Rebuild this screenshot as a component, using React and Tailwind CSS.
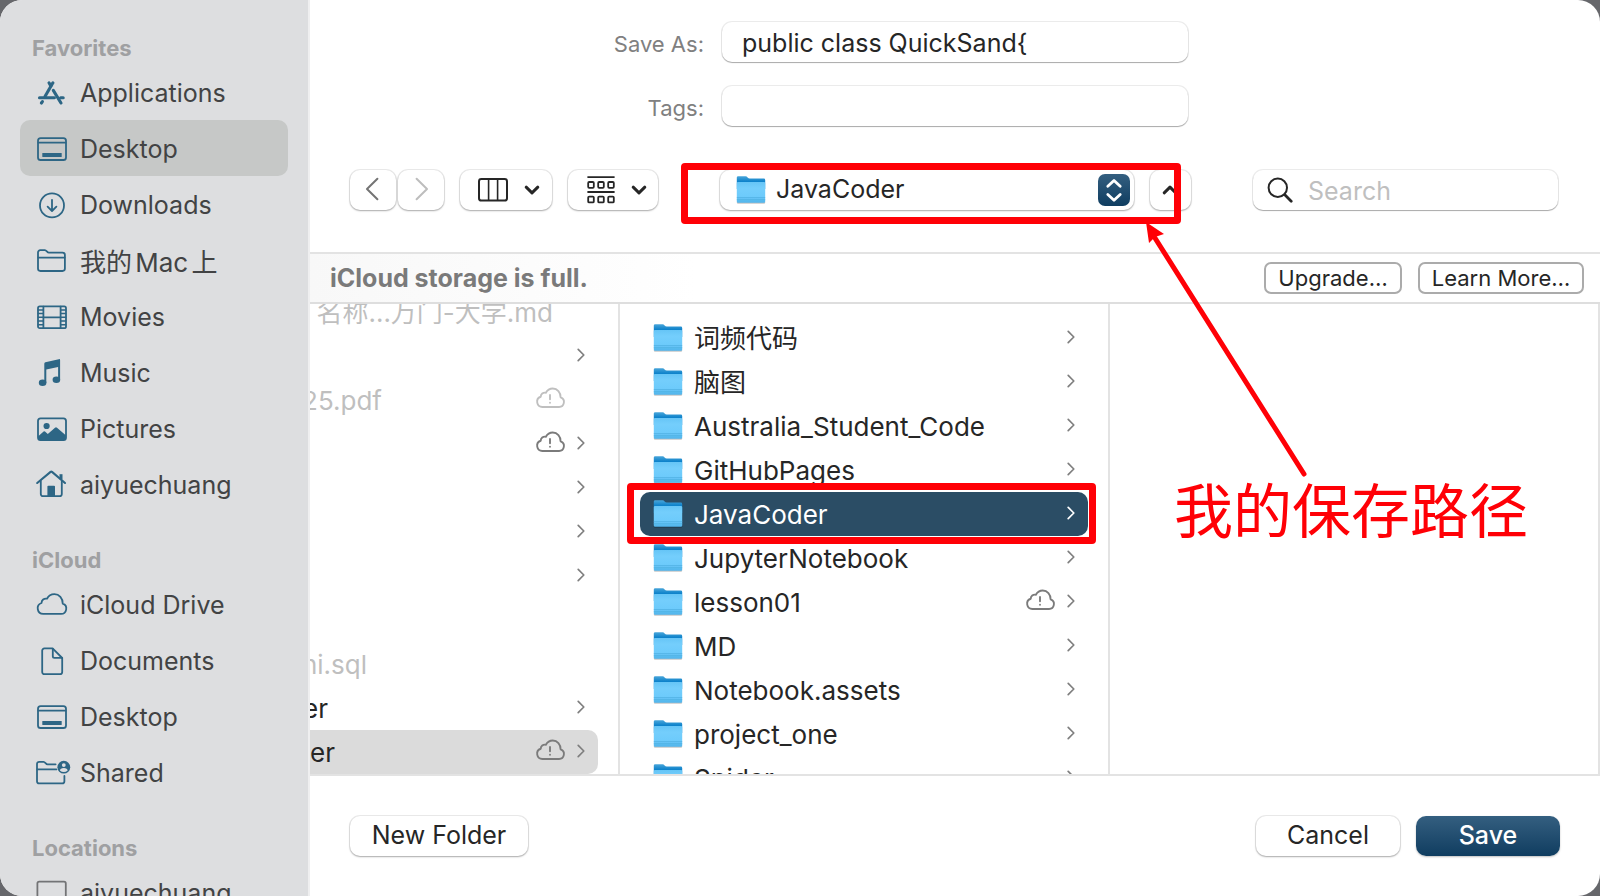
import React from "react";

const ICON = "block h-8 w-8 shrink-0 overflow-visible";

function Icon({ children }) {
  return (
    <svg
      viewBox="0 0 32 32"
      className={ICON}
      fill="none"
      stroke="currentColor"
      strokeWidth="1.8"
      strokeLinecap="round"
      strokeLinejoin="round"
      aria-hidden="true"
    >
      {children}
    </svg>
  );
}

const AppsIcon = () => (
  <Icon>
    <g strokeWidth="3.1">
      <path d="M3.5 20.8H18.4" />
      <path d="M24.6 20.8H27.2" />
      <path d="M16.9 5.8L9 19.6" />
      <path d="M13 5.8L14.8 9" />
      <path d="M17.3 13.4L25 26" />
      <path d="M6.4 24.6L5.4 26" />
    </g>
  </Icon>
);

const DesktopIcon = () => (
  <Icon>
    <rect x="2" y="5.2" width="28" height="21.8" rx="2.6" />
    <path d="M2.5 9.6H29.5" />
    <rect x="6.3" y="20" width="19.4" height="4" rx="0.6" fill="currentColor" stroke="none" />
  </Icon>
);

const DownloadIcon = () => (
  <Icon>
    <circle cx="16" cy="16.4" r="12" />
    <path d="M16 10.8V21.6M11.6 17.6L16 22L20.4 17.6" />
  </Icon>
);

const FolderOutlineIcon = () => (
  <Icon>
    <path d="M2 23.6V7.4a2.3 2.3 0 0 1 2.3-2.3h4.6c1.6 0 2.3 2.6 4 2.6h13.6a2.4 2.4 0 0 1 2.4 2.4v13.5a2.4 2.4 0 0 1-2.4 2.4H4.4A2.4 2.4 0 0 1 2 23.6z" />
    <path d="M2.4 12.6H28.6" />
  </Icon>
);

const MovieIcon = () => (
  <Icon>
    <rect x="2" y="5.4" width="28" height="21.8" rx="1.8" />
    <path d="M7.4 5.6V27M24.6 5.6V27M7.4 16.3H24.6" />
    <path
      strokeWidth="1.5"
      d="M2.4 8.9H7M2.4 12.6H7M2.4 16.3H7M2.4 20H7M2.4 23.7H7M25 8.9H29.6M25 12.6H29.6M25 16.3H29.6M25 20H29.6M25 23.7H29.6"
    />
  </Icon>
);

const MusicIcon = () => (
  <Icon>
    <g fill="currentColor" stroke="none">
      <path d="M8.3 6.7a1.4 1.4 0 0 1 1.1-1.4L22.8 2.2a1 1 0 0 1 1.3 1V22.4H22.1V9.9L10.3 12.6V26H8.3z" />
      <ellipse cx="6.6" cy="25.7" rx="3.8" ry="3.3" />
      <ellipse cx="20.4" cy="22.8" rx="3.8" ry="3.3" />
    </g>
  </Icon>
);

const PictureIcon = () => (
  <Icon>
    <rect x="2" y="5.4" width="28" height="21.8" rx="2.6" />
    <circle cx="10.6" cy="13" r="3.1" fill="currentColor" stroke="none" />
    <path
      d="M2 23.4L7.6 18.4Q8.3 17.9 9 18.5L11.8 21L19 14.7Q20 13.9 21 14.7L30 22.6V25a2.4 2.4 0 0 1-2.4 2.4H4.4A2.4 2.4 0 0 1 2 25z"
      fill="currentColor"
      stroke="none"
    />
  </Icon>
);

const HomeIcon = () => (
  <Icon>
    <path d="M1.2 14L14.6 2.9Q15.3 2.4 16 2.9L29 14" strokeWidth="2.1" />
    <path d="M4.8 12V25a2.2 2.2 0 0 0 2.2 2.2H23.6A2.2 2.2 0 0 0 25.8 25V12" />
    <path d="M25 10.4V5.2" strokeWidth="3" strokeLinecap="butt" />
    <path d="M11.4 17.6a.9.9 0 0 1 .9-.9h5.8a.9.9 0 0 1 .9.9V27H11.4z" fill="currentColor" stroke="none" />
  </Icon>
);

const CLOUD =
  "M8 20.9H25.4a5.3 5.3 0 0 0 1.9-10.3C27.4 5.4 23.8 1.2 19 1.2c-3.4 0-5.9 1.7-7.4 4.5-3.1-.5-5.4 1.4-5.5 4.3A5.6 5.6 0 0 0 8 20.9z";

const CloudIcon = () => (
  <Icon>
    <path transform="translate(-0.6 4)" d={CLOUD} />
  </Icon>
);

const DocumentIcon = () => (
  <Icon>
    <path d="M8.4 3.4H16.6L26.2 13V27a2.2 2.2 0 0 1-2.2 2.2H8.4A2.2 2.2 0 0 1 6.2 27V5.6A2.2 2.2 0 0 1 8.4 3.4z" />
    <path d="M16.8 3.8V11.2a1.6 1.6 0 0 0 1.6 1.6H26" />
  </Icon>
);

const SharedIcon = () => (
  <Icon>
    <path d="M28.4 19V24.2a2.2 2.2 0 0 1-2.2 2.2H3.2A2.2 2.2 0 0 1 1 24.2V7A2.2 2.2 0 0 1 3.2 4.8H7.6c1.6 0 2.3 2.5 4 2.5H19.6" />
    <path d="M1.4 12.4H20.4" />
    <circle cx="27.8" cy="10.2" r="6.4" fill="currentColor" stroke="none" />
    <circle cx="27.8" cy="8.1" r="1.9" fill="#dddee0" stroke="none" />
    <path d="M23.9 13.4Q24.2 10.9 27.8 10.9T31.7 13.4Q30 14.9 27.8 14.9T23.9 13.4z" fill="#dddee0" stroke="none" />
  </Icon>
);

const LaptopIcon = () => (
  <Icon>
    <rect x="1.4" y="4.6" width="28.4" height="19" rx="1.8" />
    <path d="M0 27.4H32" />
  </Icon>
);

const SECTIONS = [
  {
    title: "Favorites",
    items: [
      { label: "Applications", Glyph: AppsIcon },
      { label: "Desktop", Glyph: DesktopIcon, selected: true },
      { label: "Downloads", Glyph: DownloadIcon },
      { label: "我的Mac上", Glyph: FolderOutlineIcon, cjk: true },
      { label: "Movies", Glyph: MovieIcon },
      { label: "Music", Glyph: MusicIcon },
      { label: "Pictures", Glyph: PictureIcon },
      { label: "aiyuechuang", Glyph: HomeIcon },
    ],
  },
  {
    title: "iCloud",
    items: [
      { label: "iCloud Drive", Glyph: CloudIcon },
      { label: "Documents", Glyph: DocumentIcon },
      { label: "Desktop", Glyph: DesktopIcon },
      { label: "Shared", Glyph: SharedIcon },
    ],
  },
  {
    title: "Locations",
    items: [{ label: "aiyuechuang", Glyph: LaptopIcon, muted: true }],
  },
];

function Sidebar() {
  return (
    <nav
      aria-label="Sidebar"
      className="flex w-[310px] shrink-0 flex-col gap-8 overflow-hidden border-r-2 border-[#efeff0] bg-[#dddee0] px-5 pt-8"
    >
      {SECTIONS.map(({ title, items }) => (
        <section key={title} className="shrink-0">
          <h2 className="h-8 px-3 text-[22px] leading-8 font-bold text-[#9fa0a2]">{title}</h2>
          <ul>
            {items.map(({ label, Glyph, selected, muted, cjk }) => (
              <li key={label}>
                <button
                  type="button"
                  className={`flex h-14 w-full items-center gap-3 rounded-[10px] pt-[2px] pl-4 text-left ${
                    selected ? "bg-[#c6c8c7]" : ""
                  } ${muted ? "text-[#737476]" : "text-[#2d6685]"}`}
                >
                  <Glyph />
                  <span
                    className={`pt-[2px] whitespace-nowrap text-[#424344] ${
                      cjk ? "text-[26px] [text-autospace:normal]" : ""
                    }`}
                  >
                    {label}
                  </span>
                </button>
              </li>
            ))}
          </ul>
        </section>
      ))}
    </nav>
  );
}

function FolderIcon() {
  return (
    <svg viewBox="0 0 30 30" className="block h-[30px] w-[30px] shrink-0" aria-hidden="true">
      <defs>
        <linearGradient id="folder-back" x1="0" y1="0" x2="0" y2="1">
          <stop offset="0" stopColor="#4aa6da" />
          <stop offset="0.4" stopColor="#0f83cb" />
        </linearGradient>
        <linearGradient id="folder-front" x1="0" y1="0" x2="0" y2="1">
          <stop offset="0" stopColor="#66c5f6" />
          <stop offset="0.3" stopColor="#74cefc" />
          <stop offset="0.75" stopColor="#6ccafb" />
          <stop offset="1" stopColor="#4fb3ea" />
        </linearGradient>
      </defs>
      <rect x="0.8" y="26" width="28.4" height="2.8" rx="1.2" fill="#000" opacity="0.22" />
      <path d="M.8 2.6A1.4 1.4 0 0 1 2.2 1.2H9.6C11.2 1.2 12 3.6 13.8 3.6H27.8A1.4 1.4 0 0 1 29.2 5V14H.8z" fill="url(#folder-back)" />
      <path d="M.8 8.2A1.2 1.2 0 0 1 2 7H28A1.2 1.2 0 0 1 29.2 8.2V26.4A1.3 1.3 0 0 1 27.9 27.7H2.1A1.3 1.3 0 0 1 .8 26.4z" fill="url(#folder-front)" />
      <path d="M.8 22.6H29.2M.8 24.7H29.2" stroke="#4badde" strokeWidth="0.7" />
    </svg>
  );
}

function CloudAlert({ faded }) {
  return (
    <svg
      viewBox="0 2 32 24"
      className={`block h-[23px] w-[30px] shrink-0 overflow-visible ${faded ? "text-[#bfbfbf]" : "text-[#7b7b7b]"}`}
      fill="none"
      stroke="currentColor"
      strokeWidth="2"
      strokeLinecap="round"
      strokeLinejoin="round"
      role="img"
      aria-label="Not uploaded"
    >
      <path d={CLOUD} />
      <path d="M16 8V12.6M16 16.4V16.5" />
    </svg>
  );
}

function RowChevron({ className }) {
  return (
    <svg
      viewBox="0 1 8 14"
      className={`block h-[14px] w-2 shrink-0 overflow-visible ${className}`}
      fill="none"
      stroke="currentColor"
      strokeWidth="1.7"
      strokeLinecap="round"
      strokeLinejoin="round"
      aria-hidden="true"
    >
      <path d="M1.2 1.4L6.8 7L1.2 12.6" />
    </svg>
  );
}

/* `end` is where the visible tail of the name stops inside the scrolled column. */
const PARENT_ROWS = [
  { name: "名称…万门-大学.md", end: "w-[243px]", file: true },
  { chevron: true },
  { name: "25.pdf", end: "w-[72px]", file: true, cloud: true },
  { cloud: true, chevron: true },
  { chevron: true },
  { chevron: true },
  { chevron: true },
  {},
  { name: "ni.sql", end: "w-[57px]", file: true },
  { name: "er", end: "w-[18px]", chevron: true },
  { name: "er", end: "w-[25px]", chevron: true, cloud: true, selected: true },
];

const FOLDERS = [
  { name: "词频代码" },
  { name: "脑图" },
  { name: "Australia_Student_Code" },
  { name: "GitHubPages" },
  { name: "JavaCoder", selected: true },
  { name: "JupyterNotebook" },
  { name: "lesson01", cloud: true },
  { name: "MD" },
  { name: "Notebook.assets" },
  { name: "project_one" },
  { name: "Spider" },
];

function Columns() {
  return (
    <div className="flex min-h-0 flex-1 overflow-hidden border-b-2 border-[#e3e3e3] text-[26px]">
      <ul className="w-[310px] shrink-0 overflow-hidden border-r-2 border-[#e3e3e3] pr-5">
        {PARENT_ROWS.map((row, i) => (
          <li key={i} className="h-11 first:-mt-[14px]">
            <button
              type="button"
              aria-label={row.name ? undefined : "Folder"}
              className={`flex h-11 w-full items-center rounded-r-[10px] pr-[13px] ${row.selected ? "bg-[#dbdbdb]" : ""}`}
            >
              {row.name && (
                <span
                  className={`flex shrink-0 justify-end whitespace-nowrap ${row.end} ${
                    row.file ? "text-[#bfbfbf]" : "text-[#262626]"
                  }`}
                >
                  {row.name}
                </span>
              )}
              <span className="ml-auto flex items-center gap-3">
                {row.cloud && <CloudAlert faded={row.file} />}
                {row.chevron ? <RowChevron className="text-[#7f7f7f]" /> : <span className="w-2" />}
              </span>
            </button>
          </li>
        ))}
      </ul>
      <ul className="w-[490px] shrink-0 overflow-hidden border-r-2 border-[#e3e3e3] px-5 pt-3">
        {FOLDERS.map((row) => (
          <li key={row.name}>
            <button
              type="button"
              className={`flex h-11 w-full items-center rounded-[10px] px-[13px] text-left ${
                row.selected ? "bg-[#2b4d65] text-white" : "text-[#262626]"
              }`}
            >
              <FolderIcon />
              <span className="flex-1 pl-[11px] whitespace-nowrap">{row.name}</span>
              <span className="flex items-center gap-3">
                {row.cloud && <CloudAlert />}
                <RowChevron className={row.selected ? "text-white" : "text-[#7f7f7f]"} />
              </span>
            </button>
          </li>
        ))}
      </ul>
      <div className="flex-1 border-r-2 border-[#e3e3e3]" />
    </div>
  );
}

const RAISED =
  "rounded-[10px] bg-white shadow-[0_0_0_1px_rgba(0,0,0,0.08),0_1px_2px_rgba(0,0,0,0.28)]";
const FIELD =
  "h-10 rounded-[10px] bg-white shadow-[0_0_0_1px_rgba(0,0,0,0.08),0_1px_1px_rgba(0,0,0,0.28)] outline-none";

function DownChevron() {
  return (
    <svg viewBox="0 0 16 10" className="block h-[10px] w-4" fill="none" stroke="currentColor" strokeWidth="3" strokeLinecap="round" strokeLinejoin="round" aria-hidden="true">
      <path d="M2.2 2.2L8 7.8L13.8 2.2" />
    </svg>
  );
}

function NavChevron({ d }) {
  return (
    <svg viewBox="0 0 14 24" className="block h-6 w-[14px]" fill="none" stroke="currentColor" strokeWidth="2" strokeLinecap="round" strokeLinejoin="round" aria-hidden="true">
      <path d={d} />
    </svg>
  );
}

function Toolbar() {
  return (
    <div className="flex items-center gap-[62px] pr-[42px] pl-10">
      <div className="flex shrink-0 items-center gap-4 text-[#262626]">
        <div className="flex gap-[2px]">
          <button type="button" aria-label="Back" className={`flex h-10 w-[46px] items-center justify-center pr-[3px] pb-[2px] text-[#747474] ${RAISED}`}>
            <NavChevron d="M12.4 1.8L2 12L12.4 22.2" />
          </button>
          <button type="button" aria-label="Forward" className={`flex h-10 w-[46px] items-center justify-center pb-[2px] pl-[2px] text-[#bdbdbd] ${RAISED}`}>
            <NavChevron d="M1.6 1.8L12 12L1.6 22.2" />
          </button>
        </div>
        <button type="button" aria-label="View as columns" className={`flex h-10 w-[92px] items-center justify-center gap-4 pl-[6px] ${RAISED}`}>
          <svg viewBox="0 0 30 24" className="block h-6 w-[30px]" fill="none" stroke="currentColor" aria-hidden="true">
            <rect x="1" y="1" width="28" height="21.6" rx="2.4" strokeWidth="2" />
            <path d="M10.6 1V22.6M19.6 1V22.6" strokeWidth="1.6" />
          </svg>
          <DownChevron />
        </button>
        <button type="button" aria-label="Group items" className={`flex h-10 w-[90px] items-center justify-center gap-4 pl-[7px] ${RAISED}`}>
          <svg viewBox="0 0 28 28" className="block h-7 w-7" fill="none" stroke="currentColor" strokeWidth="1.8" aria-hidden="true">
            <path d="M.4 1.2H27.6M.4 16H27.6" />
            <rect x="1.2" y="6" width="5.6" height="5.8" rx="1" />
            <rect x="11.2" y="6" width="5.6" height="5.8" rx="1" />
            <rect x="21.2" y="6" width="5.6" height="5.8" rx="1" />
            <rect x="1.2" y="20.6" width="5.6" height="5.8" rx="1" />
            <rect x="11.2" y="20.6" width="5.6" height="5.8" rx="1" />
            <rect x="21.2" y="20.6" width="5.6" height="5.8" rx="1" />
          </svg>
          <DownChevron />
        </button>
      </div>

      <div className="flex min-w-0 flex-1 gap-4">
        <label className={`relative flex h-10 min-w-0 flex-1 items-center gap-[10px] pr-1 pl-4 ${RAISED}`}>
          <FolderIcon />
          <select
            aria-label="Where"
            defaultValue="JavaCoder"
            className="h-10 min-w-0 flex-1 appearance-none bg-transparent text-[#262626] outline-none"
          >
            <option>JavaCoder</option>
          </select>
          <svg viewBox="0 0 32 32" className="pointer-events-none block h-8 w-8 shrink-0" aria-hidden="true">
            <defs>
              <linearGradient id="stepper" x1="0" y1="0" x2="0" y2="1">
                <stop offset="0" stopColor="#345f80" />
                <stop offset="1" stopColor="#0f3d60" />
              </linearGradient>
            </defs>
            <rect width="32" height="32" rx="7" fill="url(#stepper)" />
            <path
              d="M9.8 12.2L16 6.4L22.2 12.2M9.8 20.4L16 26.2L22.2 20.4"
              fill="none"
              stroke="#fff"
              strokeWidth="2.8"
              strokeLinecap="round"
              strokeLinejoin="round"
            />
          </svg>
        </label>
        <button type="button" aria-label="Collapse browser" className={`flex h-10 w-[41px] shrink-0 items-center justify-center pr-[2px] text-[#262626] ${RAISED}`}>
          <svg viewBox="0 0 16 10" className="block h-[10px] w-4" fill="none" stroke="currentColor" strokeWidth="3" strokeLinecap="round" strokeLinejoin="round" aria-hidden="true">
            <path d="M2.2 7.8L8 2.2L13.8 7.8" />
          </svg>
        </button>
      </div>

      <label className={`flex w-[305px] shrink-0 items-center gap-[15px] px-[14px] ${FIELD}`}>
        <svg viewBox="0 0 26 26" className="block h-[26px] w-[26px] shrink-0 text-[#262626]" fill="none" stroke="currentColor" strokeLinecap="round" aria-hidden="true">
          <circle cx="10.8" cy="10.8" r="9.2" strokeWidth="2" />
          <path d="M17.8 17.8L24.2 24.2" strokeWidth="2.8" />
        </svg>
        <input
          type="search"
          aria-label="Search"
          placeholder="Search"
          className="min-w-0 flex-1 bg-transparent pt-[3px] outline-none placeholder:text-[#bfbfbf]"
        />
      </label>
    </div>
  );
}

function Annotations() {
  return (
    <div className="pointer-events-none absolute inset-0 text-[#ff0006]">
      <div className="absolute top-[163px] left-[681px] h-[61px] w-[500px] rounded-[4px] border-[7px] border-current" />
      <div className="absolute top-[483px] left-[627px] h-[61px] w-[469px] rounded-[4px] border-[7px] border-current" />
      <svg viewBox="0 0 170 260" className="absolute top-[220px] left-[1140px] h-[260px] w-[170px]" aria-hidden="true">
        <path d="M15 18L164 254" stroke="currentColor" strokeWidth="5" strokeLinecap="round" />
        <path d="M6 2L24 14L15 17L9 23z" fill="currentColor" />
      </svg>
      <p className="absolute top-[468px] left-[1174px] text-[59px] leading-[88px] whitespace-nowrap">我的保存路径</p>
    </div>
  );
}

export default function App() {
  return (
    <div className="h-screen bg-[#66676b] font-['Inter','Noto_Sans_CJK_SC',sans-serif] text-[25px]">
      <div className="relative flex h-full overflow-hidden rounded-[22px] bg-white">
        <Sidebar />
        <main className="flex min-w-0 flex-1 flex-col">
          <form className="grid grid-cols-[1fr_466px_1fr] gap-x-[18px] gap-y-5 pt-[22px]">
            <label htmlFor="save-as" className="text-right text-[22px] leading-[44px] text-[#808080]">
              Save As:
            </label>
            <input id="save-as" defaultValue="public class QuickSand{" className={`px-5 pt-[2px] text-[#262626] ${FIELD}`} />
            <span />
            <label htmlFor="tags" className="text-right text-[22px] leading-[44px] text-[#808080]">
              Tags:
            </label>
            <input id="tags" className={`px-5 pt-[2px] text-[#262626] ${FIELD}`} />
            <span />
          </form>
          <div className="border-b-2 border-[#e3e3e3] pt-10 pb-[42px]">
            <Toolbar />
          </div>
          <div className="flex h-[50px] shrink-0 items-center gap-4 border-b-2 border-[#dedede] bg-gradient-to-r from-[#f8f8f8] to-white to-30% pr-4 pl-5">
            <p className="flex-1 pt-[2px] font-bold text-[#7a7a7a]">iCloud storage is full.</p>
            <button type="button" className="h-8 w-[138px] rounded-[7px] border-2 border-[#ababab] bg-white text-[22px] leading-7 text-[#262626]">
              Upgrade…
            </button>
            <button type="button" className="h-8 w-[166px] rounded-[7px] border-2 border-[#ababab] bg-white text-[22px] leading-7 text-[#262626]">
              Learn More…
            </button>
          </div>
          <Columns />
          <footer className="flex h-[120px] shrink-0 items-center gap-4 p-10">
            <button type="button" className={`mr-auto h-10 w-[178px] text-[#262626] ${RAISED}`}>
              New Folder
            </button>
            <button type="button" className={`h-10 w-[144px] text-[#262626] ${RAISED}`}>
              Cancel
            </button>
            <button type="button" className="h-10 w-36 rounded-[10px] bg-gradient-to-b from-[#345f80] to-[#0f3d60] font-medium text-white shadow-[0_1px_2px_rgba(0,0,0,0.25)]">
              Save
            </button>
          </footer>
        </main>
        <Annotations />
      </div>
    </div>
  );
}
